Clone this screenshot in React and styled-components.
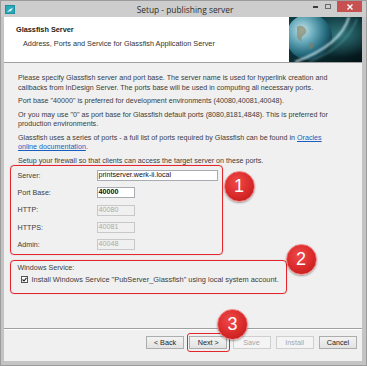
import React from 'react';
import styled, { createGlobalStyle } from 'styled-components';

const Global = createGlobalStyle`
  html, body { margin: 0; padding: 0; }
  body {
    width: 367px; height: 366px; overflow: hidden;
    font-family: "Liberation Sans", Arial, sans-serif;
    background: #fff;
  }
`;

const Window = styled.div`
  width: 367px; height: 366px; box-sizing: border-box;
  background: #c4c4c4;
  border: 1px solid #9c9c9c;
  display: flex; flex-direction: column;
`;

const TitleBar = styled.div`
  height: 16px;
  display: grid;
  grid-template-columns: 1fr auto 1fr;
  align-items: center;
  background: #cdcdcd;
`;

const AppIcon = styled.svg`
  margin-left: 4px; display: block;
`;

const Title = styled.div`
  font-family: "Open Sans", "Noto Sans", sans-serif;
  font-size: 8.4px; color: #2e2e2e; padding-top: 1px; padding-left: 3px;
`;

const Controls = styled.div`
  justify-self: end; align-self: start;
  display: flex; align-items: flex-start; margin-right: 4px;
`;

const CtrlBtn = styled.div`
  width: 12px; height: 11px; display: flex; align-items: center; justify-content: center;
`;

const CloseBtn = styled.div`
  width: 25px; height: 11px; background: #c75050; margin-left: 3px;
  display: flex; align-items: center; justify-content: center;
`;

const Client = styled.div`
  flex: 1; margin: 0 4px 4px 3px;
  background: #f0f0f0;
  display: flex; flex-direction: column;
  position: relative;
`;

const Header = styled.div`
  height: 45px; flex: none;
  background: #fff;
  border-bottom: 1px solid #a0a0a0;
  display: flex; justify-content: space-between;
`;

const HeaderText = styled.div`
  padding: 7.5px 0 0 12px; color: #222;
`;

const HeaderTitle = styled.div`
  font-size: 7.3px; font-weight: bold; line-height: 9px;
`;

const HeaderSub = styled.div`
  font-size: 7.3px; line-height: 9px; margin: 5px 0 0 7px; color: #333;
`;

const Body = styled.div`
  flex: 1; padding: 11px 14px 0 14px;
  color: #3c3c3c;
`;

const Para = styled.p`
  margin: 0 0 ${p => (p.$last ? 0 : 4)}px;
  font-size: 7.15px; line-height: 9.5px; white-space: nowrap;
`;

const Link = styled.a`
  color: #1a5fc0; text-decoration: underline;
`;

const Group = styled.div`
  box-sizing: border-box;
  margin: ${p => p.$mt || 0}px 0 0 -8px;
  width: ${p => p.$w}px;
  border: 1.5px solid #e3262b;
  border-radius: 4px;
  box-shadow: 0 0 1px rgba(200, 0, 0, 0.4);
`;

const FormGrid = styled(Group)`
  padding: 1px 0 1px 6.5px;
  display: grid;
  grid-template-columns: 79px 1fr;
  grid-auto-rows: 17.3px;
  align-items: center;
  font-size: 7.15px; color: #3c3c3c;
`;

const Input = styled.div`
  box-sizing: border-box;
  width: ${p => p.$w}px; height: 11px;
  border: 1px solid ${p => (p.$disabled ? '#c8c8c8' : '#a9abb2')};
  background: ${p => (p.$disabled ? '#f0f0f0' : '#fff')};
  color: ${p => (p.$disabled ? '#a9a9a9' : '#111')};
  font-size: 7.15px; line-height: 9px; padding-left: 1px;
  font-weight: ${p => (p.$bold ? 'bold' : 'normal')};
`;

const ServiceGroup = styled(Group)`
  padding: 3px 0 8px 6.5px;
  font-size: 7.15px; color: #3c3c3c;
`;

const ServiceLabel = styled.div`
  line-height: 9.5px;
`;

const CheckRow = styled.div`
  display: flex; align-items: center; height: 11px; padding-left: 3px;
  font-size: 7.4px; white-space: nowrap;
`;

const Check = styled.div`
  box-sizing: border-box; width: 7px; height: 7px; flex: none;
  border: 1px solid #555; background: #fff; margin-right: 4px;
  display: flex; align-items: center; justify-content: center;
`;

const Footer = styled.div`
  height: 25px; flex: none;
  border-top: 1px solid #a0a0a0;
  box-shadow: inset 0 1px 0 #fff;
  display: flex; justify-content: flex-end; align-items: flex-start;
  gap: 5.25px; padding: 7px 5px 0 0;
`;

const Button = styled.div`
  box-sizing: border-box; width: 38px; height: 13px;
  border: 1px solid ${p => (p.$disabled ? '#cfcfcf' : '#adadad')};
  background: ${p => (p.$disabled ? '#f4f4f4' : 'linear-gradient(#f3f3f3, #e2e2e2)')};
  color: ${p => (p.$disabled ? '#a6a6a6' : '#1e1e1e')};
  font-size: 7.2px; line-height: 11px; text-align: center;
`;

const Marked = styled.div`
  position: relative;
  &::after {
    content: ''; position: absolute;
    left: -2.5px; right: -2.5px; top: -3.5px; bottom: -2.5px;
    border: 1.5px solid #e3262b; border-radius: 3px;
  }
`;

const Badge = styled.div`
  position: absolute; z-index: 2;
  left: ${p => p.$x}px; top: ${p => p.$y}px;
  width: 31px; height: 31px; box-sizing: border-box; border-radius: 50%;
  background: radial-gradient(circle at 42% 35%, #ef4a4a 0%, #d92a2a 55%, #b51818 100%);
  border: 1.5px solid #f07a7a;
  box-shadow: 0 1px 2px rgba(0, 0, 0, 0.35);
  color: #fff; font-size: 18px; line-height: 28px; text-align: center;
`;

const EarthImage = () => (
  <svg width="73" height="45" viewBox="0 0 73 45" style={{ display: 'block' }}>
    <defs>
      <linearGradient id="sky" x1="0" y1="0" x2="1" y2="1">
        <stop offset="0" stopColor="#0f3d44" />
        <stop offset="0.6" stopColor="#0a2a30" />
        <stop offset="1" stopColor="#031216" />
      </linearGradient>
      <radialGradient id="earth" cx="0.35" cy="0.35" r="0.75">
        <stop offset="0" stopColor="#c4e2e6" />
        <stop offset="0.35" stopColor="#68aabb" />
        <stop offset="0.7" stopColor="#23697c" />
        <stop offset="1" stopColor="#0a2c36" />
      </radialGradient>
      <radialGradient id="glow" cx="0.7" cy="0.4" r="0.5">
        <stop offset="0" stopColor="#4fb3b8" stopOpacity="0.55" />
        <stop offset="1" stopColor="#4fb3b8" stopOpacity="0" />
      </radialGradient>
      <filter id="blur"><feGaussianBlur stdDeviation="0.8" /></filter>
    </defs>
    <rect width="73" height="45" fill="url(#sky)" />
    <rect width="73" height="45" fill="url(#glow)" />
    <circle cx="20" cy="20" r="23" fill="url(#earth)" />
    <path d="M8 10 q4 -3 8 1 q3 4 -1 7 q-4 2 -2 6 q-3 0 -5 -4z" fill="#8f8a6e" opacity="0.7" />
    <path d="M20 26 q4 -1 5 3 q-2 4 -5 3z" fill="#857d62" opacity="0.6" />
    <path d="M60 0 Q52 28 6 45" stroke="#dff6ff" strokeWidth="1.6" fill="none" filter="url(#blur)" />
    <path d="M68 2 Q58 30 20 45" stroke="#8fd3e0" strokeWidth="1" fill="none" opacity="0.6" filter="url(#blur)" />
  </svg>
);

export default function App() {
  return (
    <>
      <Global />
      <Window>
        <TitleBar>
          <AppIcon width="10" height="9" viewBox="0 0 10 9">
            <rect width="10" height="9" fill="#1f8fa0" />
            <rect x="1" y="1" width="8" height="7" fill="#2aa9b8" />
            <path d="M2 7 L5 4 L8 3 L6 6z" fill="#dff4f6" />
          </AppIcon>
          <Title>Setup - publishing server</Title>
          <Controls>
            <CtrlBtn>
              <svg width="6" height="3"><rect y="1" width="5" height="2" fill="#3c3c3c" /></svg>
            </CtrlBtn>
            <CtrlBtn>
              <svg width="7" height="6"><rect x="0.5" y="0.5" width="5" height="4" fill="none" stroke="#6a6a6a" /></svg>
            </CtrlBtn>
            <CloseBtn>
              <svg width="6" height="6" viewBox="0 0 6 6">
                <path d="M0.5 0.5 L5.5 5.5 M5.5 0.5 L0.5 5.5" stroke="#fff" strokeWidth="1.4" />
              </svg>
            </CloseBtn>
          </Controls>
        </TitleBar>
        <Client>
          <Header>
            <HeaderText>
              <HeaderTitle>Glassfish Server</HeaderTitle>
              <HeaderSub>Address, Ports and Service for Glassfish Application Server</HeaderSub>
            </HeaderText>
            <EarthImage />
          </Header>
          <Body>
            <Para>
              Please specify Glassfish server and port base. The server name is used for hyperlink creation and<br />
              callbacks from InDesign Server. The ports base will be used in computing all necessary ports.
            </Para>
            <Para>Port base "40000" is preferred for development environments (40080,40081,40048).</Para>
            <Para>
              Or you may use "0" as port base for Glassfish default ports (8080,8181,4848). This is preferred for<br />
              production environments.
            </Para>
            <Para>
              Glassfish uses a series of ports - a full list of ports required by Glassfish can be found in <Link>Oracles</Link><br />
              <Link>online documentation</Link>.
            </Para>
            <Para $last>Setup your firewall so that clients can access the target server on these ports.</Para>
            <FormGrid $w={213} $mt={-1}>
              <span>Server:</span>
              <Input $w={121}>printserver.werk-ii.local</Input>
              <span>Port Base:</span>
              <Input $w={38} $bold>40000</Input>
              <span>HTTP:</span>
              <Input $w={38} $disabled>40080</Input>
              <span>HTTPS:</span>
              <Input $w={38} $disabled>40081</Input>
              <span>Admin:</span>
              <Input $w={38} $disabled>40048</Input>
            </FormGrid>
            <ServiceGroup $w={277} $mt={5}>
              <ServiceLabel>Windows Service:</ServiceLabel>
              <CheckRow>
                <Check>
                  <svg width="5" height="5" viewBox="0 0 5 5">
                    <path d="M0.5 2.5 L2 4 L4.5 0.8" stroke="#222" strokeWidth="1.1" fill="none" />
                  </svg>
                </Check>
                Install Windows Service "PubServer_Glassfish" using local system account.
              </CheckRow>
            </ServiceGroup>
          </Body>
          <Footer>
            <Button>&lt; Back</Button>
            <Marked><Button>Next &gt;</Button></Marked>
            <Button $disabled>Save</Button>
            <Button $disabled>Install</Button>
            <Button>Cancel</Button>
          </Footer>
          <Badge $x={219.5} $y={153.5}>1</Badge>
          <Badge $x={281.5} $y={226.5}>2</Badge>
          <Badge $x={213} $y={292}>3</Badge>
        </Client>
      </Window>
    </>
  );
}
